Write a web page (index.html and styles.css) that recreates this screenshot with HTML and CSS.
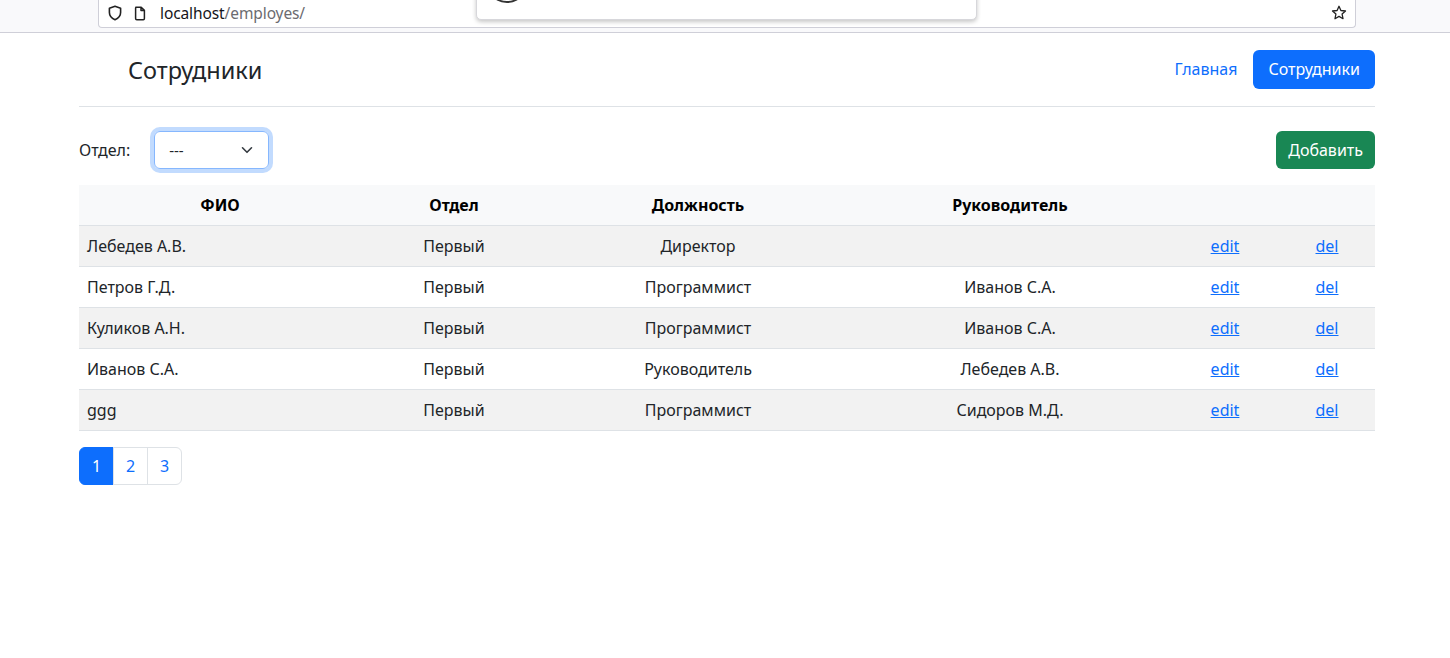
FILE: index.html
```html
<!DOCTYPE html>
<html lang="ru">
<head>
<meta charset="utf-8">
<title>Сотрудники</title>
<link rel="stylesheet" href="styles.css">
</head>
<body>
<div class="chrome">
  <div class="urlbar">
    <svg class="ic-shield" width="14" height="16" viewBox="0 0 14 16"><path d="M7 1.2 L12.6 3.2 V7.6 C12.6 10.8 10.2 13.4 7 14.8 C3.8 13.4 1.4 10.8 1.4 7.6 V3.2 Z" fill="none" stroke="#222" stroke-width="1.6" stroke-linejoin="round"/></svg>
    <svg class="ic-page" width="12" height="15" viewBox="0 0 12 15"><path d="M1.8 1.2 H7.2 L10.4 4.4 V12.6 C10.4 13.3 10 13.8 9.3 13.8 H2.8 C2.1 13.8 1.6 13.3 1.6 12.6 V2.2 C1.6 1.6 2 1.2 2.6 1.2 Z M7 1.4 V4.6 H10.2" fill="none" stroke="#222" stroke-width="1.5" stroke-linejoin="round"/></svg>
    <span class="url"><span class="host">localhost</span><span class="path">/employes/</span></span>
    <span class="spacer"></span>
    <svg class="ic-star" width="16" height="16" viewBox="0 0 16 16"><path d="M8 1.3 L9.9 5.5 L14.5 6 L11.1 9.1 L12 13.7 L8 11.4 L4 13.7 L4.9 9.1 L1.5 6 L6.1 5.5 Z" fill="none" stroke="#222" stroke-width="1.3" stroke-linejoin="round"/></svg>
  </div>
  <div class="popup"><span class="popup-circle"></span></div>
</div>

<div class="container">
  <header class="header">
    <span class="brand">Сотрудники</span>
    <nav class="nav">
      <a class="nav-link" href="#">Главная</a>
      <a class="nav-link active" href="#">Сотрудники</a>
    </nav>
  </header>

  <div class="toolbar">
    <label class="filter">
      <span class="filter-label">Отдел:</span>
      <span class="select">
        <span>---</span>
        <svg width="12" height="12" viewBox="0 0 12 12"><path d="M1.5 3.8l4.5 4.5 4.5-4.5" fill="none" stroke="#343a40" stroke-width="1.6" stroke-linecap="round" stroke-linejoin="round"/></svg>
      </span>
    </label>
    <button class="btn-add">Добавить</button>
  </div>

  <table class="table">
    <colgroup>
      <col class="c1"><col class="c2"><col class="c3"><col class="c4"><col class="c5"><col class="c6">
    </colgroup>
    <thead>
      <tr><th>ФИО</th><th>Отдел</th><th>Должность</th><th>Руководитель</th><th></th><th></th></tr>
    </thead>
    <tbody>
      <tr><td class="left">Лебедев А.В.</td><td>Первый</td><td>Директор</td><td></td><td><a href="#">edit</a></td><td><a href="#">del</a></td></tr>
      <tr><td class="left">Петров Г.Д.</td><td>Первый</td><td>Программист</td><td>Иванов С.А.</td><td><a href="#">edit</a></td><td><a href="#">del</a></td></tr>
      <tr><td class="left">Куликов А.Н.</td><td>Первый</td><td>Программист</td><td>Иванов С.А.</td><td><a href="#">edit</a></td><td><a href="#">del</a></td></tr>
      <tr><td class="left">Иванов С.А.</td><td>Первый</td><td>Руководитель</td><td>Лебедев А.В.</td><td><a href="#">edit</a></td><td><a href="#">del</a></td></tr>
      <tr><td class="left">ggg</td><td>Первый</td><td>Программист</td><td>Сидоров М.Д.</td><td><a href="#">edit</a></td><td><a href="#">del</a></td></tr>
    </tbody>
  </table>

  <ul class="pagination">
    <li class="page active">1</li>
    <li class="page">2</li>
    <li class="page">3</li>
  </ul>
</div>
</body>
</html>
```

FILE: styles.css
```css
* { box-sizing: border-box; }
html, body { margin: 0; padding: 0; }
body {
  font-family: "Noto Sans", "Open Sans", sans-serif;
  font-size: 16px;
  color: #212529;
  background: #fff;
  width: 1450px;
  height: 658px;
  overflow: hidden;
}

/* browser chrome */
.chrome {
  position: relative;
  height: 34px;
  background: #f9f9fb;
  border-bottom: 1px solid #cfcfd8;
  padding-left: 98px;
  padding-right: 94px;
}
.urlbar {
  height: 29px;
  margin-top: -1px;
  background: #fff;
  border: 1px solid #cfcfd8;
  border-top: none;
  border-radius: 0 0 4px 4px;
  display: flex;
  align-items: center;
  padding: 0 8px 0 9px;
}
.ic-shield { margin-right: 12px; }
.ic-page { margin-right: 14px; }
.url { font-size: 15.5px; letter-spacing: -0.1px; }
.host { color: #15141a; }
.path { color: #6b6b70; }
.spacer { flex: 1; }
.popup {
  position: absolute;
  left: 476px;
  top: -10px;
  width: 501px;
  height: 31px;
  background: #fff;
  border: 1px solid #d7d7db;
  border-radius: 0 0 5px 5px;
  box-shadow: 0 2px 4px rgba(0,0,0,0.22);
  overflow: hidden;
}
.popup-circle {
  position: absolute;
  left: 16px;
  top: -4px;
  width: 28px;
  height: 17px;
  border: 2px solid #333;
  border-radius: 50%;
}

/* page */
.container {
  width: 1296px;
  margin-left: 79px;
}
.header {
  display: flex;
  align-items: center;
  justify-content: space-between;
  padding: 17px 0 17px;
  border-bottom: 1px solid #dee2e6;
}
.brand {
  font-size: 23.5px;
  padding-left: 49px;
  color: #212529;
}
.nav { display: flex; align-items: center; }
.nav-link {
  color: #0d6efd;
  text-decoration: none;
  font-size: 16px;
  padding: 8px 16px;
  border-radius: 6px;
  line-height: 23px;
}
.nav-link.active { background: #0d6efd; color: #fff; padding: 8px 15px; }

.toolbar {
  display: flex;
  align-items: center;
  justify-content: space-between;
  padding: 24px 0 16px;
}
.filter { display: flex; align-items: center; }
.filter-label { margin-right: 24px; }
.select {
  width: 115px;
  height: 38px;
  border: 1px solid #86b7fe;
  border-radius: 6px;
  box-shadow: 0 0 0 4px rgba(13,110,253,0.25);
  display: flex;
  align-items: center;
  justify-content: space-between;
  padding: 0 15px 0 14px;
  font-size: 15px;
}
.btn-add {
  font-family: inherit;
  font-size: 16px;
  color: #fff;
  background: #198754;
  border: none;
  border-radius: 6px;
  height: 38px;
  padding: 0 12px;
}

.table {
  width: 1296px;
  border-collapse: collapse;
  table-layout: fixed;
}
.c1 { width: 282px; }
.c2 { width: 186px; }
.c3 { width: 302px; }
.c4 { width: 322px; }
.c5 { width: 108px; }
.c6 { width: 96px; }
.table th, .table td {
  height: 41px;
  padding: 0 8px;
  text-align: center;
  border-bottom: 1px solid #dee2e6;
  font-size: 16px;
}
.table th { height: 40px; background: #f8f9fa; font-weight: 700; color: #000; }
.table td.left { text-align: left; }
.table tbody tr:nth-child(odd) td { background: #f2f2f2; }
.table a { color: #0d6efd; text-decoration: underline; }

.pagination {
  list-style: none;
  margin: 16px 0 0;
  padding: 0;
  display: flex;
}
.page {
  width: 35px;
  height: 38px;
  display: flex;
  align-items: center;
  justify-content: center;
  color: #0d6efd;
  border: 1px solid #dee2e6;
  margin-left: -1px;
  font-size: 16px;
}
.page:first-child { margin-left: 0; border-radius: 6px 0 0 6px; }
.page:last-child { border-radius: 0 6px 6px 0; }
.page.active { background: #0d6efd; border-color: #0d6efd; color: #fff; }
```
